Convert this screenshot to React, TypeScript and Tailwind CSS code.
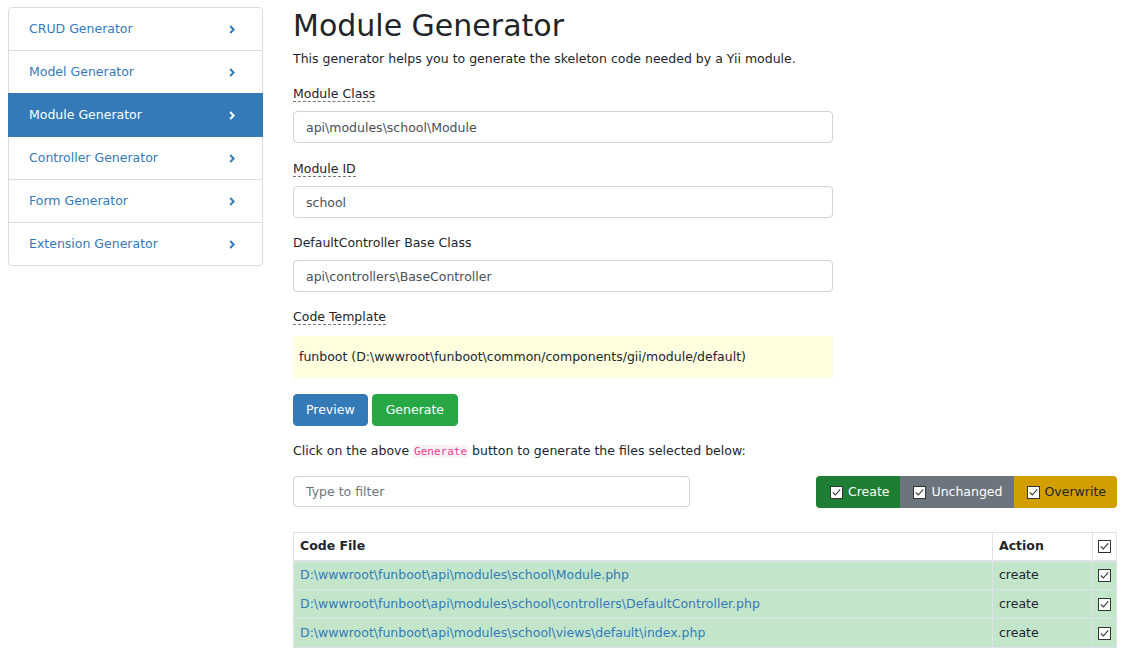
import React from 'react';

const Check = () => (
  <svg width="13" height="13" viewBox="0 0 13 13" className="inline-block shrink-0">
    <rect x="0.5" y="0.5" width="12" height="12" fill="white" stroke="#333" />
    <path d="M2.8 6.4 L5.3 9 L10.2 3.4" fill="none" stroke="#333" strokeWidth="1.1" />
  </svg>
);

const Chevron = ({ color }: { color: string }) => (
  <svg width="6" height="9" viewBox="0 0 6 9">
    <path d="M1.2 1 L4.6 4.5 L1.2 8" fill="none" stroke={color} strokeWidth="2" />
  </svg>
);

const navItems = [
  'CRUD Generator',
  'Model Generator',
  'Module Generator',
  'Controller Generator',
  'Form Generator',
  'Extension Generator',
];

const Label = ({ text, help = true }: { text: string; help?: boolean }) => (
  <div className="leading-[20px] mb-[7px]">
    <span className={help ? 'border-b border-dashed border-[#777]' : ''}>{text}</span>
  </div>
);

const Field = ({ label, value, help = true, gap }: { label: string; value: string; help?: boolean; gap: string }) => (
  <div className={gap}>
    <Label text={label} help={help} />
    <input
      readOnly
      defaultValue={value}
      className="block h-[32px] w-[540px] border border-[#ced4da] rounded-[4px] px-[12px] text-[#495057] outline-none bg-white"
    />
  </div>
);

const files = [
  'D:\\wwwroot\\funboot\\api\\modules\\school\\Module.php',
  'D:\\wwwroot\\funboot\\api\\modules\\school\\controllers\\DefaultController.php',
  'D:\\wwwroot\\funboot\\api\\modules\\school\\views\\default\\index.php',
];

export default function App() {
  return (
    <div
      className="min-h-[663px] w-[1133px] bg-white text-[#212529] text-[12.5px] flex pl-[8px] pt-[7px] gap-[30px]"
      style={{ fontFamily: '"DejaVu Sans", Verdana, sans-serif' }}
    >
      <div className="w-[255px] shrink-0 flex flex-col">
        {navItems.map((n, i) => {
          const active = n === 'Module Generator';
          return (
            <div
              key={n}
              className={
                'h-[44px] flex items-center justify-between pl-[20px] pr-[27px] border ' +
                (i > 0 ? '-mt-px ' : '') +
                (i === 0 ? 'rounded-t-[4px] ' : '') +
                (i === navItems.length - 1 ? 'rounded-b-[4px] ' : '') +
                (active
                  ? 'bg-[#337ab7] border-[#337ab7] text-white relative z-10'
                  : 'bg-white border-[#ddd] text-[#337ab7]')
              }
            >
              <span>{n}</span>
              <Chevron color={active ? '#ffffff' : '#337ab7'} />
            </div>
          );
        })}
      </div>

      <div className="w-[824px] shrink-0">
        <h1 className="text-[30px] leading-[36px] font-normal mt-[1px] mb-[5px] text-[#212529]">Module Generator</h1>
        <p className="leading-[20px] mb-[15px]">
          This generator helps you to generate the skeleton code needed by a Yii module.
        </p>

        <Field label="Module Class" value="api\modules\school\Module" gap="mb-[16px]" />
        <Field label="Module ID" value="school" gap="mb-[15px]" />
        <Field label="DefaultController Base Class" value="api\controllers\BaseController" help={false} gap="mb-[15px]" />

        <div className="mb-[16px]">
          <div className="leading-[20px] mb-[9px]">
            <span className="border-b border-dashed border-[#777]">Code Template</span>
          </div>
          <div className="h-[42px] w-[540px] bg-[#ffffe0] flex items-center px-[6px]">
            funboot (D:\wwwroot\funboot\common/components/gii/module/default)
          </div>
        </div>

        <div className="flex gap-[4px] mb-[15px]">
          <div className="h-[32px] px-[12px] flex items-center rounded-[4px] bg-[#337ab7] text-white border border-[#337ab7]">
            Preview
          </div>
          <div className="h-[32px] px-[13px] flex items-center rounded-[4px] bg-[#28a745] text-white border border-[#28a745]">
            Generate
          </div>
        </div>

        <p className="leading-[20px] mb-[14px]">
          Click on the above{' '}
          <code
            className="text-[11px] text-[#e83e8c] bg-[#f9f2f4] px-[1px] rounded-[2px]"
            style={{ fontFamily: '"DejaVu Sans Mono", "Liberation Mono", monospace' }}
          >
            Generate
          </code>{' '}
          button to generate the files selected below:
        </p>

        <div className="flex justify-between items-start mb-[24px]">
          <input
            readOnly
            placeholder="Type to filter"
            className="h-[31px] w-[397px] border border-[#ced4da] rounded-[4px] px-[12px] placeholder:text-[#6c757d] outline-none"
          />
          <div className="flex h-[32px] rounded-[4px] overflow-hidden">
            <div className="flex items-center gap-[5px] pl-[14px] pr-[11px] bg-[#1e7e34] text-white">
              <Check /> <span>Create</span>
            </div>
            <div className="flex items-center gap-[5px] pl-[13px] pr-[11px] bg-[#6c757d] text-white">
              <Check /> <span>Unchanged</span>
            </div>
            <div className="flex items-center gap-[5px] pl-[13px] pr-[11px] bg-[#d39e00] text-[#212529]">
              <Check /> <span>Overwrite</span>
            </div>
          </div>
        </div>

        <table className="w-[824px] border-collapse border border-[#dee2e6] table-fixed">
          <colgroup>
            <col />
            <col className="w-[100px]" />
            <col className="w-[24px]" />
          </colgroup>
          <thead>
            <tr className="h-[28px]">
              <th className="text-left font-bold border border-[#dee2e6] border-b-2 px-[6px]">Code File</th>
              <th className="text-left font-bold border border-[#dee2e6] border-b-2 px-[6px]">Action</th>
              <th className="border border-[#dee2e6] border-b-2 px-[5px] text-left">
                <Check />
              </th>
            </tr>
          </thead>
          <tbody>
            {files.map((f) => (
              <tr key={f} className="h-[29px] bg-[#c3e6cb]">
                <td className="border border-[#dee2e6] px-[6px] text-[#337ab7] whitespace-nowrap">{f}</td>
                <td className="border border-[#dee2e6] px-[6px]">create</td>
                <td className="border border-[#dee2e6] px-[5px]">
                  <Check />
                </td>
              </tr>
            ))}
          </tbody>
        </table>
      </div>
    </div>
  );
}
